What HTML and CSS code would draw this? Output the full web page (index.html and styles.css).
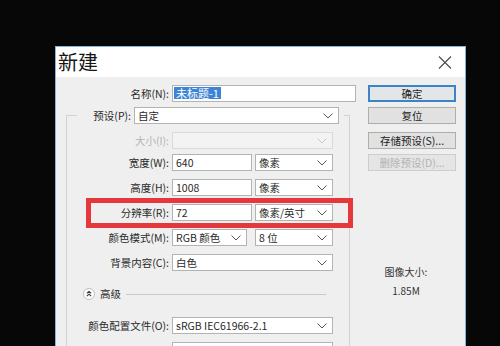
FILE: index.html
```html
<!DOCTYPE html>
<html lang="zh-CN">
<head>
    <meta charset="UTF-8">
    <meta name="viewport" content="width=device-width, initial-scale=1.0">
    <title>新建</title>
    <link rel="stylesheet" href="styles.css">
</head>
<body>
    <div class="dialog">
        <div class="titlebar">
            <span class="title">新建</span>
            <svg class="close" width="14" height="13" viewBox="0 0 14 13">
                <path d="M1 0.5 L13 12.5 M13 0.5 L1 12.5" stroke="#4a4a4a" stroke-width="1.1" fill="none"/>
            </svg>
        </div>

        <div class="content">
            <div class="main">
                <div class="row">
                    <span class="lbl wide">名称(N):</span>
                    <div class="field name-field"><span class="sel-text">未标题-1</span></div>
                </div>

                <fieldset class="group">
                    <legend class="preset">
                        <span class="lbl preset-lbl">预设(P):</span>
                        <div class="field select preset-select">自定
                            <svg class="chev" width="10" height="6" viewBox="0 0 10 6"><path d="M0.5 0.5 L5 5 L9.5 0.5" stroke="#555" fill="none"/></svg>
                        </div>
                    </legend>

                    <div class="row first disabled">
                        <span class="lbl">大小(I):</span>
                        <div class="field select full"><svg class="chev" width="10" height="6" viewBox="0 0 10 6"><path d="M0.5 0.5 L5 5 L9.5 0.5" stroke="#c8c8c8" fill="none"/></svg></div>
                    </div>

                    <div class="row tight">
                        <span class="lbl">宽度(W):</span>
                        <div class="field num">640</div>
                        <div class="field select unit">像素
                            <svg class="chev" width="10" height="6" viewBox="0 0 10 6"><path d="M0.5 0.5 L5 5 L9.5 0.5" stroke="#555" fill="none"/></svg>
                        </div>
                    </div>

                    <div class="row">
                        <span class="lbl">高度(H):</span>
                        <div class="field num">1008</div>
                        <div class="field select unit">像素
                            <svg class="chev" width="10" height="6" viewBox="0 0 10 6"><path d="M0.5 0.5 L5 5 L9.5 0.5" stroke="#555" fill="none"/></svg>
                        </div>
                    </div>

                    <div class="row marked">
                        <span class="lbl">分辨率(R):</span>
                        <div class="field num">72</div>
                        <div class="field select unit">像素/英寸
                            <svg class="chev" width="10" height="6" viewBox="0 0 10 6"><path d="M0.5 0.5 L5 5 L9.5 0.5" stroke="#555" fill="none"/></svg>
                        </div>
                    </div>

                    <div class="row">
                        <span class="lbl">颜色模式(M):</span>
                        <div class="field select mode">RGB 颜色
                            <svg class="chev" width="10" height="6" viewBox="0 0 10 6"><path d="M0.5 0.5 L5 5 L9.5 0.5" stroke="#555" fill="none"/></svg>
                        </div>
                        <div class="field select unit">8 位
                            <svg class="chev" width="10" height="6" viewBox="0 0 10 6"><path d="M0.5 0.5 L5 5 L9.5 0.5" stroke="#555" fill="none"/></svg>
                        </div>
                    </div>

                    <div class="row">
                        <span class="lbl">背景内容(C):</span>
                        <div class="field select full">白色
                            <svg class="chev" width="10" height="6" viewBox="0 0 10 6"><path d="M0.5 0.5 L5 5 L9.5 0.5" stroke="#555" fill="none"/></svg>
                        </div>
                    </div>

                    <div class="advanced">
                        <svg class="adv-icon" width="12" height="12" viewBox="0 0 12 12">
                            <circle cx="6" cy="6" r="5.5" fill="#fff" stroke="#bdbdbd"/>
                            <path d="M3.8 5.4 L6 3.4 L8.2 5.4 M3.8 8.2 L6 6.2 L8.2 8.2" stroke="#333" stroke-width="1.1" fill="none"/>
                        </svg>
                        <span class="adv-text">高级</span>
                        <span class="adv-line"></span>
                    </div>

                    <div class="row profile">
                        <span class="lbl">颜色配置文件(O):</span>
                        <div class="field select full">sRGB IEC61966-2.1
                            <svg class="chev" width="10" height="6" viewBox="0 0 10 6"><path d="M0.5 0.5 L5 5 L9.5 0.5" stroke="#555" fill="none"/></svg>
                        </div>
                    </div>

                    <div class="row">
                        <span class="lbl"></span>
                        <div class="field select full"></div>
                    </div>
                </fieldset>
            </div>

            <div class="side">
                <div class="btn default">确定</div>
                <div class="btn near">复位</div>
                <div class="btn">存储预设(S)...</div>
                <div class="btn near disabled">删除预设(D)...</div>

                <div class="size-info">
                    <div>图像大小:</div>
                    <div>1.85M</div>
                </div>
            </div>
        </div>
    </div>
</body>
</html>
```

FILE: styles.css
```css
html, body {
    margin: 0;
    height: 100%;
    overflow: hidden;
}

body {
    background-color: #070707;
    padding: 46px 0 0 55px;
    box-sizing: border-box;
    font-family: "Noto Sans CJK SC", "Liberation Sans", sans-serif;
    font-size: 10.5px;
    color: #2a2a2a;
}

.dialog {
    width: 411px;
    height: 330px;
    box-sizing: border-box;
    border: 1px solid #86b3da;
    border-bottom: none;
    background-color: #efefef;
}

.titlebar {
    height: 30px;
    background-color: #fff;
    display: flex;
    align-items: center;
    justify-content: space-between;
    padding: 0 13px 0 2px;
}

.title {
    font-size: 20px;
    line-height: 24px;
    color: #151515;
}

.content {
    display: flex;
}

.main {
    width: 302px;
    padding-top: 8px;
}

.row {
    display: flex;
    align-items: center;
    height: 17px;
    margin-top: 8px;
}

.lbl {
    width: 95px;
    box-sizing: border-box;
    padding-right: 3px;
    text-align: right;
    white-space: nowrap;
    line-height: 15px;
}

.lbl.wide {
    width: 116px;
}

.field {
    height: 17px;
    box-sizing: border-box;
    border: 1px solid #b3b3b3;
    background-color: #fff;
    padding-left: 3px;
    line-height: 15px;
    white-space: nowrap;
}

.main > .row {
    margin-top: 0;
}

.name-field {
    width: 184px;
    padding-left: 1px;
}

.sel-text {
    display: inline-block;
    background-color: #3d84d6;
    color: #fff;
    font-size: 11px;
    line-height: 12px;
    padding: 0 2px;
    margin-top: 1px;
    vertical-align: top;
}

.select {
    display: flex;
    align-items: center;
    justify-content: space-between;
    padding-right: 5px;
}

.chev {
    flex-shrink: 0;
}

.group {
    margin: 5px 0 0 10px;
    width: 284px;
    box-sizing: border-box;
    border: 1px solid #d2d2d2;
    border-bottom: none;
    padding: 0 0 40px 10px;
    min-width: 0;
}

.preset {
    display: flex;
    align-items: center;
    padding: 0 5px 0 0;
    height: 17px;
}

.preset-lbl {
    width: 57px;
}

.preset-select {
    width: 205px;
}

.row.first {
    margin-top: 8px;
}

.row.tight {
    margin-top: 5px;
}

.full {
    width: 161px;
}

.num {
    width: 80px;
}

.unit {
    width: 78px;
    margin-left: 3px;
}

.mode {
    width: 75px;
    margin-right: 5px;
}

.mode + .unit {
    margin-left: 3px;
}

.disabled .lbl {
    color: #b4b4b4;
}

.disabled .field {
    background-color: #f3f3f3;
    border-color: #dadada;
    justify-content: flex-end;
}

.marked {
    position: relative;
}

/* red annotation frame drawn over the resolution row */
.marked::after {
    content: "";
    position: absolute;
    left: 9px;
    right: -4px;
    top: -6px;
    bottom: -7px;
    border: 5px solid #e5383c;
}

.advanced {
    display: flex;
    align-items: center;
    height: 12px;
    margin-top: 17px;
    padding-left: 6px;
}

.adv-text {
    margin-left: 5px;
    line-height: 12px;
}

.adv-line {
    flex: 1;
    height: 1px;
    margin: 0 23px 0 5px;
    background-color: #c9c9c9;
}

.row.profile {
    margin-top: 17px;
}

.side {
    flex: 1;
    padding: 8px 9px 0 10px;
}

.btn {
    width: 88px;
    height: 17px;
    box-sizing: border-box;
    border: 1px solid #adadad;
    background-color: #e1e1e1;
    text-align: center;
    line-height: 15px;
    color: #222;
    margin-top: 8px;
}

.btn.default {
    margin-top: 0;
    border: 2px solid #3b84c6;
    line-height: 13px;
    background-color: #e3e6e9;
}

.btn.near {
    margin-top: 5px;
}

.btn.disabled {
    color: #b2b2b2;
    border-color: #cdcdcd;
    background-color: #e5e5e5;
}

.size-info {
    margin-top: 91px;
    padding-right: 12px;
    text-align: center;
    font-size: 10px;
    line-height: 19px;
    color: #333;
}
```
